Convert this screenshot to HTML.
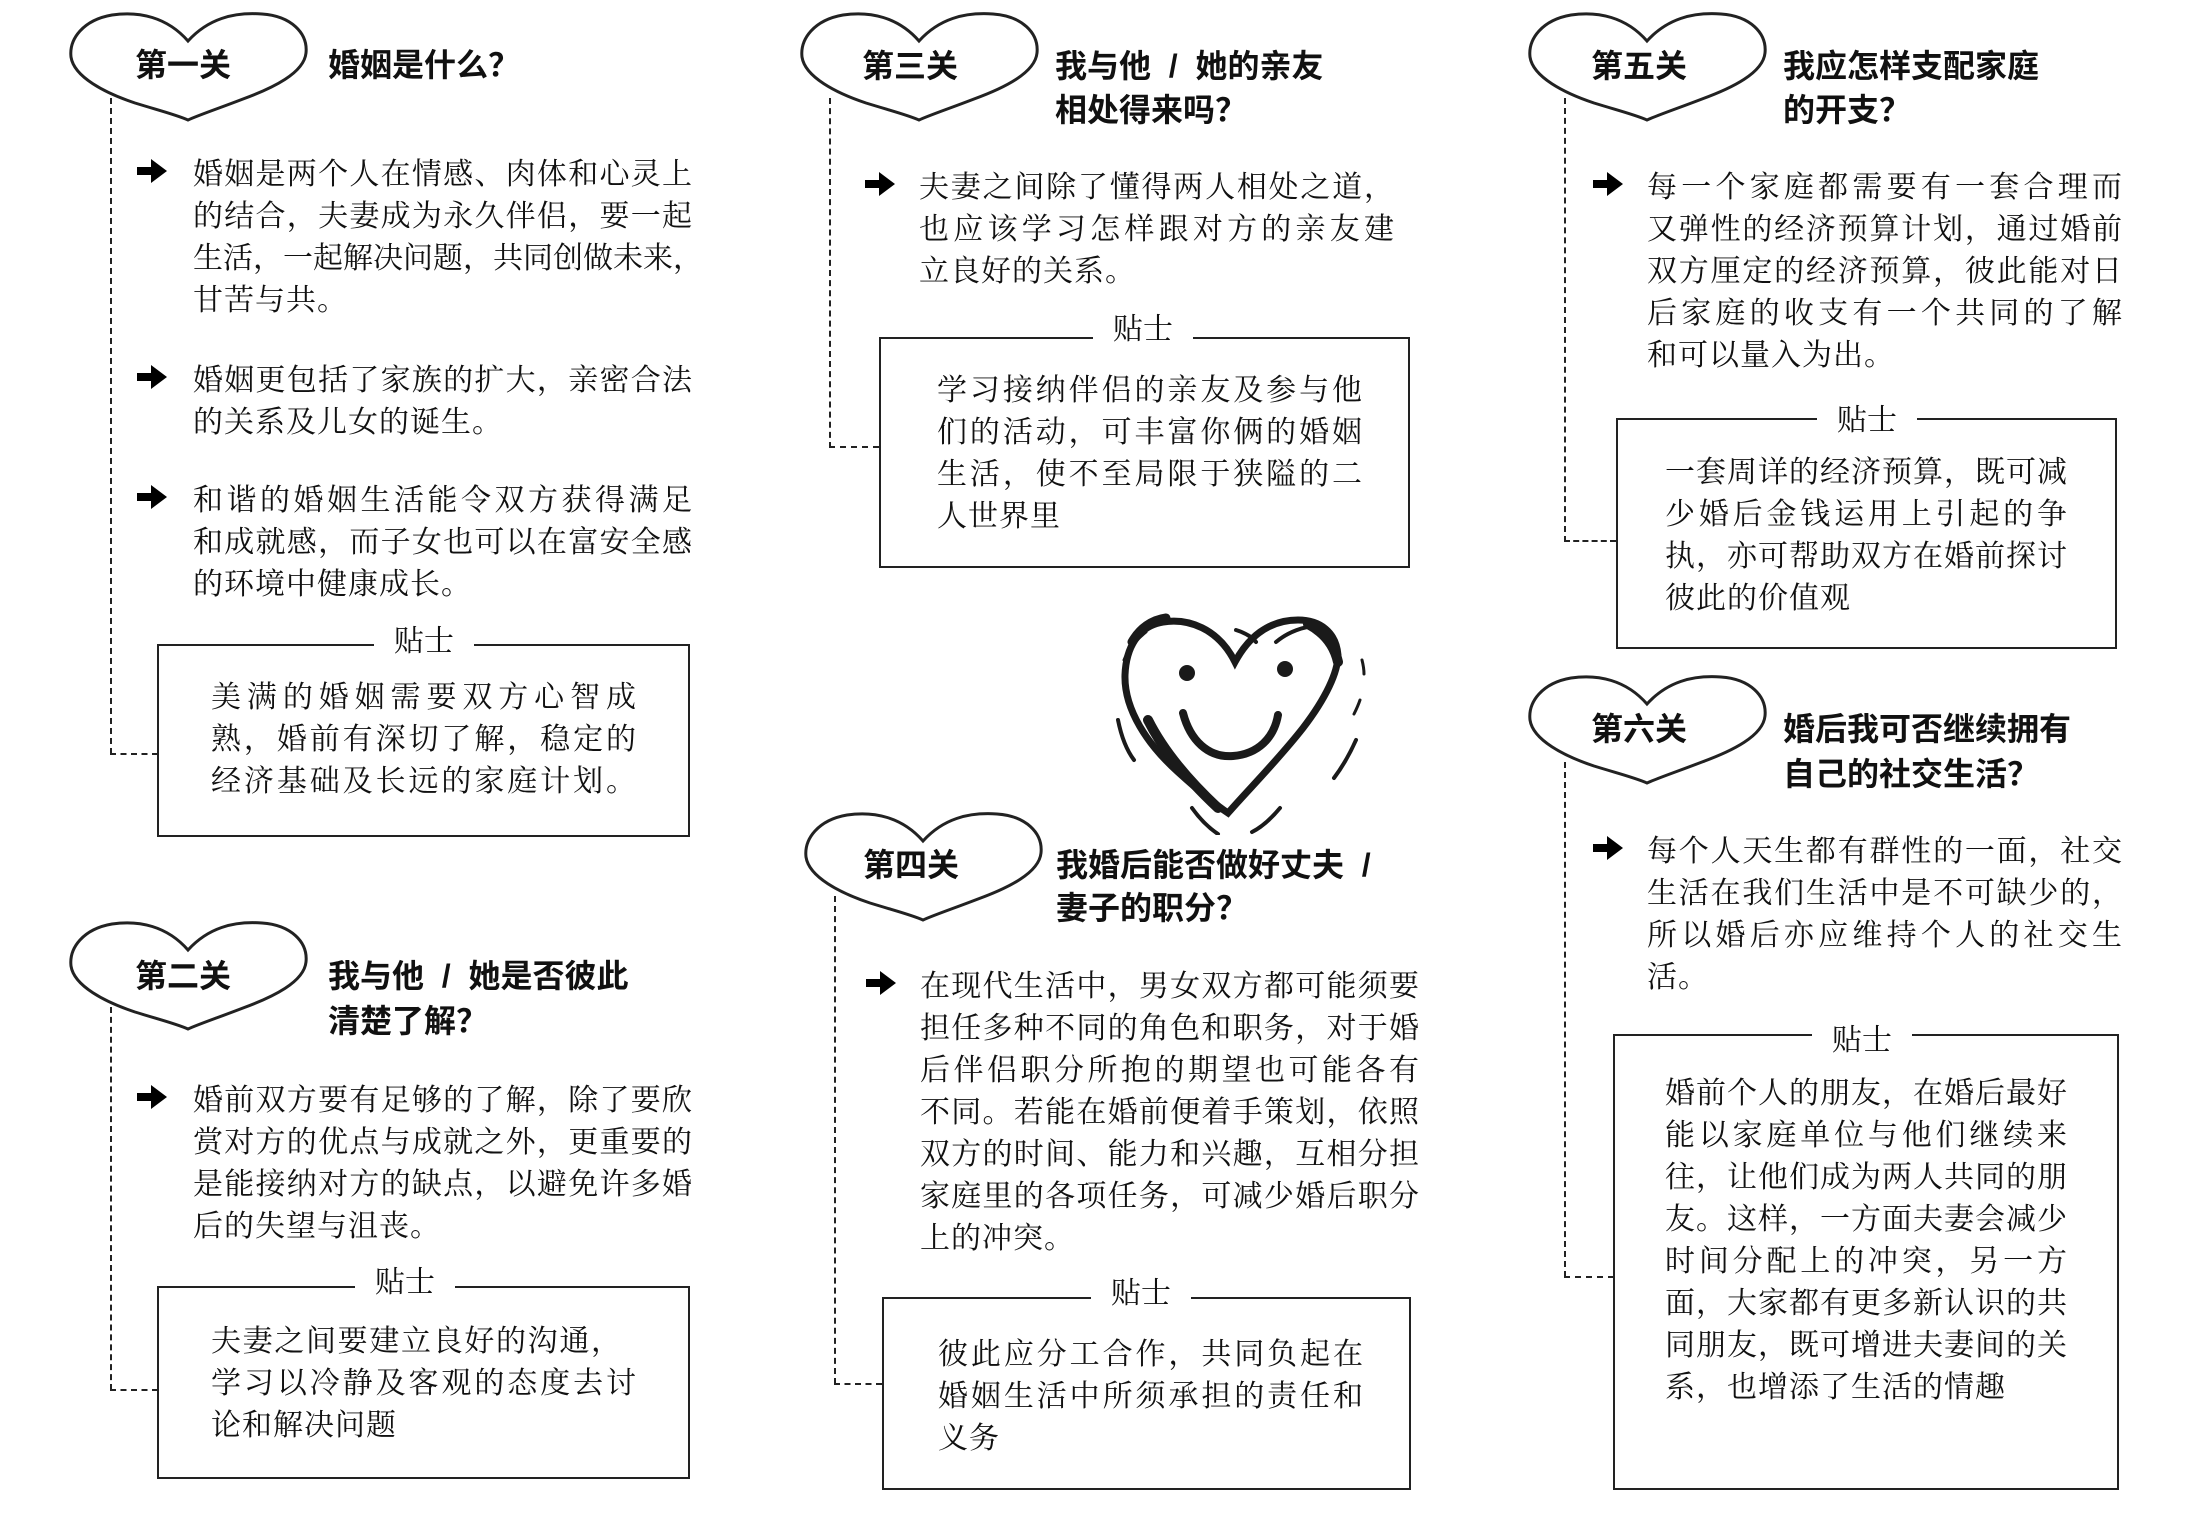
<!DOCTYPE html>
<html><head><meta charset="utf-8">
<style>
html,body{margin:0;padding:0;background:#fff;}
body{width:2194px;height:1540px;position:relative;overflow:hidden;color:#111;}
.a{position:absolute;}
.h{font-family:"Liberation Sans","Noto Sans CJK SC",sans-serif;font-weight:bold;font-size:32px;line-height:44px;white-space:nowrap;}
.t{font-family:"Noto Serif CJK SC","Liberation Serif",serif;font-size:30px;line-height:42px;}
.t div{text-align:justify;text-align-last:justify;white-space:nowrap;height:42px;}
.t div.l{text-align-last:left;letter-spacing:1px;}
.box{position:absolute;border:2px solid #222;box-sizing:border-box;}
.lab{position:absolute;background:#fff;padding:0 20px;font-family:"Noto Serif CJK SC","Liberation Serif",serif;font-size:30px;line-height:36px;}
.vd{position:absolute;border-left:2px dashed #222;width:0;}
.hd{position:absolute;border-top:2px dashed #222;height:0;}
svg.heart{position:absolute;width:242px;height:110px;overflow:visible;}
svg.arr{position:absolute;width:32px;height:24px;}
</style></head><body>

<svg width="0" height="0" style="position:absolute"><defs>
<path id="hp" d="M121,30 C100,6 72,0 45,4 C16,9 2,28 4,46 C7,66 38,82 68,92 C94,100 110,104 121,109 C132,104 150,98 176,88 C206,77 237,62 239,42 C241,22 224,5 195,3 C166,1 141,8 121,30 Z" fill="#fff" stroke="#222" stroke-width="3"/>
<path id="ap" d="M0,8 H14 V0 L30,12 L14,24 V16 H0 Z" fill="#000"/>
</defs></svg>

<!-- ===== Column 1 ===== -->
<div class="vd" style="left:110px;top:98px;height:656px"></div>
<div class="hd" style="left:110px;top:753px;width:48px"></div>
<svg class="heart" style="left:67px;top:11px" viewBox="0 0 242 110"><use href="#hp"/></svg>
<div class="a h" style="left:135px;top:43px">第一关</div>
<div class="a h" style="left:328px;top:43px">婚姻是什么？</div>

<svg class="arr" style="left:136px;top:159px" viewBox="0 0 30 24"><use href="#ap"/></svg>
<div class="a t" style="left:193px;top:150px;width:499px">
<div>婚姻是两个人在情感、肉体和心灵上</div><div>的结合，夫妻成为永久伴侣，要一起</div><div>生活，一起解决问题，共同创做未来，</div><div class="l">甘苦与共。</div></div>

<svg class="arr" style="left:136px;top:365px" viewBox="0 0 30 24"><use href="#ap"/></svg>
<div class="a t" style="left:193px;top:356px;width:499px">
<div>婚姻更包括了家族的扩大，亲密合法</div><div class="l">的关系及儿女的诞生。</div></div>

<svg class="arr" style="left:136px;top:485px" viewBox="0 0 30 24"><use href="#ap"/></svg>
<div class="a t" style="left:193px;top:476px;width:499px">
<div>和谐的婚姻生活能令双方获得满足</div><div>和成就感，而子女也可以在富安全感</div><div class="l">的环境中健康成长。</div></div>

<div class="box" style="left:157px;top:644px;width:533px;height:193px"></div>
<div class="lab" style="left:374px;top:620px">贴士</div>
<div class="a t" style="left:211px;top:673px;width:425px">
<div>美满的婚姻需要双方心智成</div><div>熟，婚前有深切了解，稳定的</div><div>经济基础及长远的家庭计划。</div></div>

<div class="vd" style="left:110px;top:1007px;height:383px"></div>
<div class="hd" style="left:110px;top:1389px;width:48px"></div>
<svg class="heart" style="left:67px;top:920px" viewBox="0 0 242 110"><use href="#hp"/></svg>
<div class="a h" style="left:135px;top:954px">第二关</div>
<div class="a h" style="left:328px;top:954px">我与他 &nbsp;/&nbsp; 她是否彼此</div>
<div class="a h" style="left:328px;top:999px">清楚了解？</div>

<svg class="arr" style="left:136px;top:1085px" viewBox="0 0 30 24"><use href="#ap"/></svg>
<div class="a t" style="left:193px;top:1076px;width:499px">
<div>婚前双方要有足够的了解，除了要欣</div><div>赏对方的优点与成就之外，更重要的</div><div>是能接纳对方的缺点，以避免许多婚</div><div class="l">后的失望与沮丧。</div></div>

<div class="box" style="left:157px;top:1286px;width:533px;height:193px"></div>
<div class="lab" style="left:355px;top:1261px">贴士</div>
<div class="a t" style="left:211px;top:1317px;width:425px">
<div style="width:410px">夫妻之间要建立良好的沟通，</div><div>学习以冷静及客观的态度去讨</div><div class="l">论和解决问题</div></div>

<!-- ===== Column 2 ===== -->
<div class="vd" style="left:829px;top:98px;height:350px"></div>
<div class="hd" style="left:829px;top:446px;width:50px"></div>
<svg class="heart" style="left:798px;top:11px" viewBox="0 0 242 110"><use href="#hp"/></svg>
<div class="a h" style="left:862px;top:44px">第三关</div>
<div class="a h" style="left:1055px;top:44px">我与他 &nbsp;/&nbsp; 她的亲友</div>
<div class="a h" style="left:1055px;top:88px">相处得来吗？</div>

<svg class="arr" style="left:864px;top:172px" viewBox="0 0 30 24"><use href="#ap"/></svg>
<div class="a t" style="left:919px;top:163px;width:475px">
<div>夫妻之间除了懂得两人相处之道，</div><div>也应该学习怎样跟对方的亲友建</div><div class="l">立良好的关系。</div></div>

<div class="box" style="left:879px;top:337px;width:531px;height:231px"></div>
<div class="lab" style="left:1093px;top:308px">贴士</div>
<div class="a t" style="left:937px;top:366px;width:425px">
<div>学习接纳伴侣的亲友及参与他</div><div>们的活动，可丰富你俩的婚姻</div><div>生活，使不至局限于狭隘的二</div><div class="l">人世界里</div></div>

<!-- smiley heart -->
<svg class="a" style="left:1108px;top:600px" width="260" height="235" viewBox="0 0 260 235">
<g fill="none" stroke="#1a1a1a" stroke-linecap="round">
<path d="M127,62 C110,28 80,18 55,22 C30,26 18,48 17,75 C16,110 40,145 70,172 C92,192 108,205 120,213 C140,190 170,160 195,128 C218,98 230,72 230,55 C228,32 212,20 190,20 C160,20 140,38 127,62 Z" stroke-width="7"/>
<path d="M40,120 C55,150 80,180 110,208" stroke-width="10"/>
<path d="M200,24 C215,32 226,44 230,62" stroke-width="10"/>
<path d="M58,18 C44,20 32,28 24,42" stroke-width="9"/>
<path d="M38,32 C28,40 20,50 16,60" stroke-width="3"/>
<path d="M128,30 C138,33 145,38 148,42" stroke-width="4"/>
<path d="M168,42 C180,32 196,26 210,26" stroke-width="4"/>
<path d="M10,120 C14,140 20,152 26,160" stroke-width="4"/>
<path d="M248,140 C240,158 232,170 226,178" stroke-width="4"/>
<path d="M84,208 C94,222 104,230 110,234" stroke-width="4"/>
<path d="M172,208 C162,220 152,228 144,232" stroke-width="4"/>
<path d="M254,60 C256,68 256,72 256,74" stroke-width="3"/>
<path d="M252,100 C250,106 248,110 246,114" stroke-width="3"/>
<path d="M75,113 C82,140 100,158 125,156 C150,154 166,138 170,115" stroke-width="8"/>
</g>
<circle cx="79" cy="73" r="8" fill="#1a1a1a"/>
<circle cx="177" cy="69" r="8" fill="#1a1a1a"/>
</svg>

<div class="vd" style="left:834px;top:896px;height:488px"></div>
<div class="hd" style="left:834px;top:1383px;width:48px"></div>
<svg class="heart" style="left:802px;top:811px" viewBox="0 0 242 110"><use href="#hp"/></svg>
<div class="a h" style="left:863px;top:843px">第四关</div>
<div class="a h" style="left:1056px;top:843px">我婚后能否做好丈夫 &nbsp;/</div>
<div class="a h" style="left:1056px;top:886px">妻子的职分？</div>

<svg class="arr" style="left:865px;top:971px" viewBox="0 0 30 24"><use href="#ap"/></svg>
<div class="a t" style="left:920px;top:962px;width:499px">
<div>在现代生活中，男女双方都可能须要</div><div>担任多种不同的角色和职务，对于婚</div><div>后伴侣职分所抱的期望也可能各有</div><div>不同。若能在婚前便着手策划，依照</div><div>双方的时间、能力和兴趣，互相分担</div><div>家庭里的各项任务，可减少婚后职分</div><div class="l">上的冲突。</div></div>

<div class="box" style="left:882px;top:1297px;width:529px;height:193px"></div>
<div class="lab" style="left:1091px;top:1272px">贴士</div>
<div class="a t" style="left:938px;top:1330px;width:425px">
<div>彼此应分工合作，共同负起在</div><div>婚姻生活中所须承担的责任和</div><div class="l">义务</div></div>

<!-- ===== Column 3 ===== -->
<div class="vd" style="left:1564px;top:98px;height:444px"></div>
<div class="hd" style="left:1564px;top:540px;width:52px"></div>
<svg class="heart" style="left:1526px;top:11px" viewBox="0 0 242 110"><use href="#hp"/></svg>
<div class="a h" style="left:1591px;top:44px">第五关</div>
<div class="a h" style="left:1783px;top:44px">我应怎样支配家庭</div>
<div class="a h" style="left:1783px;top:88px">的开支？</div>

<svg class="arr" style="left:1592px;top:172px" viewBox="0 0 30 24"><use href="#ap"/></svg>
<div class="a t" style="left:1647px;top:163px;width:475px">
<div>每一个家庭都需要有一套合理而</div><div>又弹性的经济预算计划，通过婚前</div><div>双方厘定的经济预算，彼此能对日</div><div>后家庭的收支有一个共同的了解</div><div class="l">和可以量入为出。</div></div>

<div class="box" style="left:1616px;top:418px;width:501px;height:231px"></div>
<div class="lab" style="left:1817px;top:399px">贴士</div>
<div class="a t" style="left:1665px;top:448px;width:402px">
<div>一套周详的经济预算，既可减</div><div>少婚后金钱运用上引起的争</div><div>执，亦可帮助双方在婚前探讨</div><div class="l">彼此的价值观</div></div>

<div class="vd" style="left:1564px;top:762px;height:515px"></div>
<div class="hd" style="left:1564px;top:1276px;width:50px"></div>
<svg class="heart" style="left:1526px;top:674px" viewBox="0 0 242 110"><use href="#hp"/></svg>
<div class="a h" style="left:1591px;top:707px">第六关</div>
<div class="a h" style="left:1783px;top:707px">婚后我可否继续拥有</div>
<div class="a h" style="left:1783px;top:752px">自己的社交生活？</div>

<svg class="arr" style="left:1592px;top:836px" viewBox="0 0 30 24"><use href="#ap"/></svg>
<div class="a t" style="left:1647px;top:827px;width:475px">
<div>每个人天生都有群性的一面，社交</div><div>生活在我们生活中是不可缺少的，</div><div>所以婚后亦应维持个人的社交生</div><div class="l">活。</div></div>

<div class="box" style="left:1613px;top:1034px;width:506px;height:456px"></div>
<div class="lab" style="left:1812px;top:1019px">贴士</div>
<div class="a t" style="left:1665px;top:1069px;width:402px">
<div>婚前个人的朋友，在婚后最好</div><div>能以家庭单位与他们继续来</div><div>往，让他们成为两人共同的朋</div><div>友。这样，一方面夫妻会减少</div><div>时间分配上的冲突，另一方</div><div>面，大家都有更多新认识的共</div><div>同朋友，既可增进夫妻间的关</div><div class="l">系，也增添了生活的情趣</div></div>

</body></html>
